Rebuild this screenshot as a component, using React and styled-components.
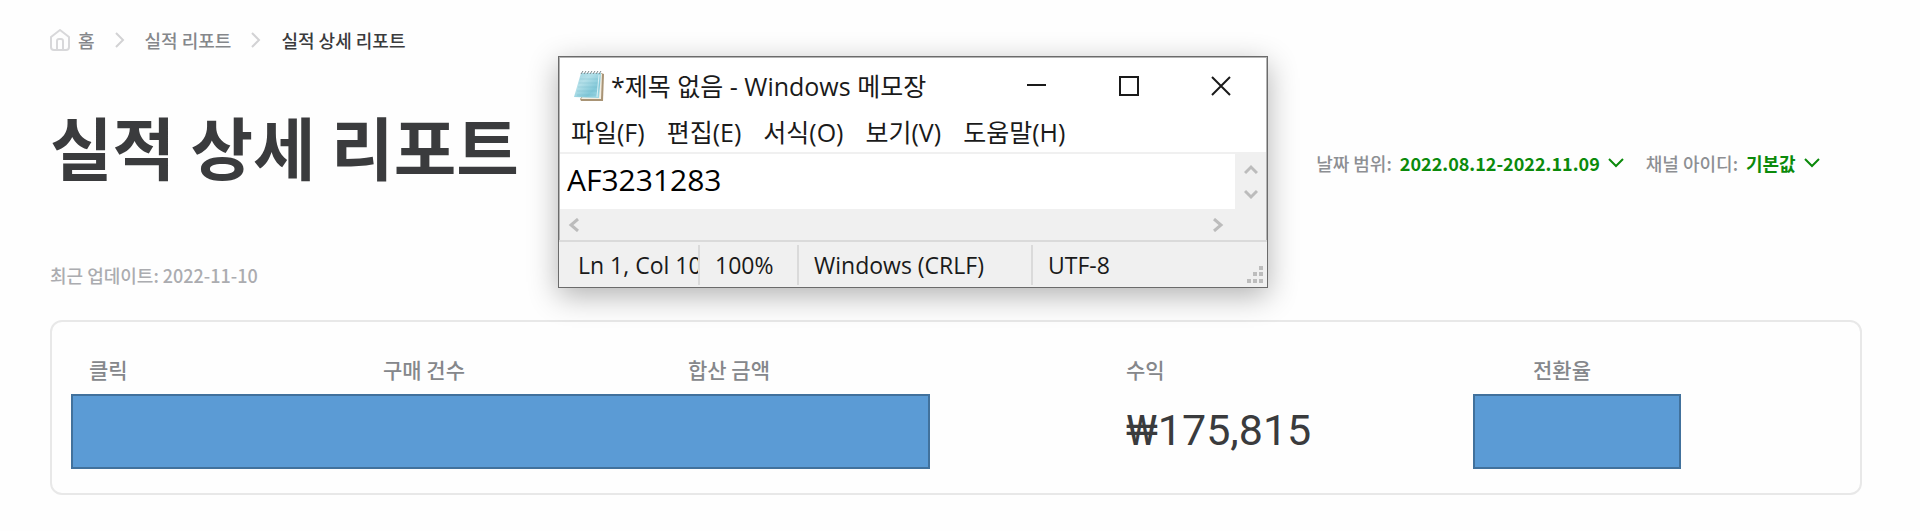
import React, { useState } from 'react';
import styled, { createGlobalStyle } from 'styled-components';

const GlobalStyle = createGlobalStyle`
  * {
    box-sizing: border-box;
  }

  body {
    margin: 0;
    background: #fefefe;
    color: #3a3b3d;
    font-family: 'Noto Sans CJK KR', sans-serif;
    font-size: 18px;
    line-height: 24px;
  }

  button,
  select,
  textarea {
    margin: 0;
    padding: 0;
    border: 0;
    background: none;
    color: inherit;
    font: inherit;
  }

  button {
    cursor: pointer;
  }

  svg {
    display: block;
    flex: none;
  }
`;

const Page = styled.main`
  position: relative;
  padding: 28px 58px 36px 50px;
`;

const Breadcrumb = styled.nav`
  display: flex;
  align-items: center;
  gap: 20px;
  font-weight: 500;

  a {
    display: flex;
    align-items: center;
    gap: 8px;
    color: #85878b;
    text-decoration: none;
  }

  a[aria-current] {
    color: #3a3b3d;
  }
`;

const Header = styled.header`
  display: flex;
  justify-content: space-between;
  align-items: center;
  padding: 44px 42px 0 0;

  h1 {
    margin: 0;
    font-size: 68px;
    font-weight: 700;
    line-height: 100px;
  }
`;

const Filters = styled.div`
  display: flex;
  gap: 22px;
  padding-top: 34px;
`;

const Filter = styled.div`
  display: flex;
  align-items: center;
  gap: 8px;
  color: #8d8f93;
  font-weight: 500;

  button,
  select {
    color: #0b8a0b;
    font-weight: 700;
    appearance: none;
  }
`;

const Updated = styled.p`
  margin: 0;
  padding: 67px 0 33px;
  color: #abacb0;
  font-weight: 500;
`;

const Card = styled.section`
  height: 175px;
  padding: 35px 19px 0;
  border: 2px solid #e8e8e8;
  border-radius: 12px;
  background: #fefefe;
`;

const Labels = styled.div`
  display: grid;
  grid-template-columns: 294fr 305fr 438fr 407fr 308fr;
  padding-left: 18px;
  color: #85878b;
  font-size: 21px;
  font-weight: 500;
  line-height: 24px;
`;

const Values = styled.div`
  display: grid;
  grid-template-columns: 859fr 196fr 347fr 208fr 160fr;
  align-items: center;
  margin-top: 13px;
`;

const Block = styled.div`
  grid-column: ${({ $column }) => $column};
  height: 75px;
  border: 2px solid #41719c;
  background: #5b9bd5;
`;

const Amount = styled.strong`
  grid-column: 3;
  padding-bottom: 4px;
  font-family: Roboto, sans-serif;
  font-size: 43px;
  font-weight: 400;
  line-height: 48px;
`;

const Window = styled.section`
  position: absolute;
  top: 56px;
  left: 558px;
  width: 710px;
  border: 1px solid #6b6b6b;
  outline: 1px solid #b4b4b4;
  outline-offset: -2px;
  background: #fff;
  box-shadow: 0 8px 28px rgba(0, 0, 0, 0.3);
  color: #1a1a1a;
  font-family: 'Open Sans', 'Noto Sans CJK KR', sans-serif;
  font-size: 25px;
  line-height: 34px;
`;

const TitleBar = styled.div`
  display: flex;
  align-items: center;
  height: 58px;
  padding-left: 14px;

  h2 {
    flex: 1;
    margin: 0;
    padding-left: 6px;
    font-size: inherit;
    font-weight: 400;
  }
`;

const WindowButton = styled.button`
  display: grid;
  place-items: center;
  width: 92px;
  height: 58px;
`;

const MenuBar = styled.div`
  display: flex;
  align-items: flex-start;
  gap: 22px;
  height: 37px;
  padding-left: 12px;
`;

const Editor = styled.div`
  display: grid;
  grid-template-columns: 1fr 32px;
  border-top: 2px solid #f0f0f0;
  background: #f0f0f0;

  textarea {
    display: block;
    width: 100%;
    height: 55px;
    padding: 6px 8px;
    background: #fff;
    color: #000;
    font-size: 30px;
    line-height: 40px;
    overflow: hidden;
    resize: none;
    white-space: pre;
  }
`;

const ScrollV = styled.div`
  display: flex;
  flex-direction: column;
  align-items: center;
  justify-content: space-between;
  padding: 8px 0;
`;

const ScrollH = styled.div`
  display: flex;
  align-items: center;
  justify-content: space-between;
  height: 31px;
  padding: 0 10px 0 8px;
`;

const StatusBar = styled.div`
  position: relative;
  display: grid;
  grid-template-columns: 141px 99px 234px 1fr;
  padding: 3px 0 2px;
  border-top: 2px solid #dadada;
  background: #f0f0f0;
  font-size: 23px;

  span {
    height: 40px;
    padding-left: 15px;
    border-right: 2px solid #dadada;
    line-height: 40px;
    overflow: hidden;
    white-space: nowrap;
  }

  span:first-child {
    padding-left: 19px;
  }

  span:last-of-type {
    border-right: 0;
  }

  svg {
    position: absolute;
    right: 3px;
    bottom: 3px;
  }
`;

const arrows = {
  up: 'M1 11 L7 5 L13 11',
  down: 'M1 4 L7 10 L13 4',
  left: 'M11 1 L4 7 L11 13',
  right: 'M3 1 L10 7 L3 13',
};

function ScrollArrow({ dir, label }) {
  return (
    <button type="button" aria-label={label}>
      <svg width="14" height="14" viewBox="0 0 14 14" fill="none" stroke="#bcbcbc" strokeWidth="3">
        <path d={arrows[dir]} />
      </svg>
    </button>
  );
}

function Separator() {
  return (
    <svg width="10" height="16" viewBox="0 0 10 16" fill="none" stroke="#d2d2d4" strokeWidth="2">
      <path d="M1 1 L8 8 L1 15" />
    </svg>
  );
}

function Chevron() {
  return (
    <svg width="16" height="10" viewBox="0 0 16 10" fill="none" stroke="#0b8a0b" strokeWidth="2">
      <path d="M1 1 L8 8 L15 1" />
    </svg>
  );
}

function HomeIcon() {
  return (
    <svg width="20" height="22" viewBox="0 0 20 22" fill="none" stroke="#d8d8da" strokeWidth="2" strokeLinejoin="round">
      <path d="M1 8 L10 1 L19 8 V18 Q19 21 16 21 H4 Q1 21 1 18 Z" />
      <path d="M7 21 V12 Q7 10 9 10 H11 Q13 10 13 12 V21" />
    </svg>
  );
}

function NotepadIcon() {
  return (
    <svg width="32" height="32" viewBox="0 0 32 32">
      <defs>
        <linearGradient id="paper" x1="0" y1="0" x2="1" y2="1">
          <stop offset="0" stopColor="#9fd3df" />
          <stop offset="0.35" stopColor="#b4e0e9" />
          <stop offset="0.7" stopColor="#82c8d8" />
          <stop offset="1" stopColor="#a5dbe6" />
        </linearGradient>
      </defs>
      <path d="M28 3 L31 4 L30 31 L8 31 L7 29 Z" fill="#a99475" />
      <path d="M27 3 L29 4 L28 29 L8 29 Z" fill="#f4eee2" />
      <path d="M8 3 L28 3 L26 28 L1 27 Z" fill="url(#paper)" />
      <path d="M7 9 H25 M6 13 H25 M5 17 H24 M4 21 H24 M4 25 H23" stroke="#62adc0" strokeWidth="1" opacity="0.25" />
      <path d="M26 5 L24 27" stroke="#d8f1f6" strokeWidth="1" />
      <path d="M8 4 L10 1 M11 4 L13 1 M14 4 L16 1 M17 4 L19 1 M20 4 L22 1 M23 4 L25 1 M26 4 L28 1" stroke="#7a8589" strokeWidth="1" />
    </svg>
  );
}

const menus = ['파일(F)', '편집(E)', '서식(O)', '보기(V)', '도움말(H)'];

const metrics = ['클릭', '구매 건수', '합산 금액', '수익', '전환율'];

function Notepad() {
  const [text, setText] = useState('AF3231283');

  return (
    <Window>
      <TitleBar>
        <NotepadIcon />
        <h2>*제목 없음 - Windows 메모장</h2>
        <WindowButton type="button" aria-label="최소화">
          <svg width="20" height="20" viewBox="0 0 20 20" stroke="#1a1a1a" strokeWidth="2">
            <path d="M0 9 H19" />
          </svg>
        </WindowButton>
        <WindowButton type="button" aria-label="최대화">
          <svg width="20" height="20" viewBox="0 0 20 20" fill="none" stroke="#1a1a1a" strokeWidth="2">
            <path d="M1 1 H19 V19 H1 Z" />
          </svg>
        </WindowButton>
        <WindowButton type="button" aria-label="닫기">
          <svg width="20" height="20" viewBox="0 0 20 20" stroke="#1a1a1a" strokeWidth="2">
            <path d="M1 1 L19 19 M19 1 L1 19" />
          </svg>
        </WindowButton>
      </TitleBar>
      <MenuBar>
        {menus.map(menu => <button type="button" key={menu}>{menu}</button>)}
      </MenuBar>
      <Editor>
        <textarea
          aria-label="내용"
          rows={1}
          spellCheck={false}
          value={text}
          onChange={e => setText(e.target.value)}
        />
        <ScrollV>
          <ScrollArrow dir="up" label="위로" />
          <ScrollArrow dir="down" label="아래로" />
        </ScrollV>
        <ScrollH>
          <ScrollArrow dir="left" label="왼쪽으로" />
          <ScrollArrow dir="right" label="오른쪽으로" />
        </ScrollH>
      </Editor>
      <StatusBar>
        <span>Ln 1, Col 10</span>
        <span>100%</span>
        <span>Windows (CRLF)</span>
        <span>UTF-8</span>
        <svg width="18" height="18" viewBox="0 0 18 18" fill="#bdbdbd">
          <path d="M13 0h4v4h-4z M7 6h4v4H7z M13 6h4v4h-4z M1 13h4v4H1z M7 13h4v4H7z M13 13h4v4h-4z" />
        </svg>
      </StatusBar>
    </Window>
  );
}

export default function App() {
  return (
    <Page>
      <GlobalStyle />
      <Breadcrumb>
        <a href="#home"><HomeIcon />홈</a>
        <Separator />
        <a href="#reports">실적 리포트</a>
        <Separator />
        <a href="#detail" aria-current="page">실적 상세 리포트</a>
      </Breadcrumb>
      <Header>
        <h1>실적 상세 리포트</h1>
        <Filters>
          <Filter>
            <label htmlFor="range">날짜 범위:</label>
            <button type="button" id="range">2022.08.12-2022.11.09</button>
            <Chevron />
          </Filter>
          <Filter>
            <label htmlFor="channel">채널 아이디:</label>
            <select id="channel">
              <option>기본값</option>
            </select>
            <Chevron />
          </Filter>
        </Filters>
      </Header>
      <Updated>최근 업데이트: 2022-11-10</Updated>
      <Card>
        <Labels>
          {metrics.map(metric => <span key={metric}>{metric}</span>)}
        </Labels>
        <Values>
          <Block $column={1} />
          <Amount>₩175,815</Amount>
          <Block $column={4} />
        </Values>
      </Card>
      <Notepad />
    </Page>
  );
}
